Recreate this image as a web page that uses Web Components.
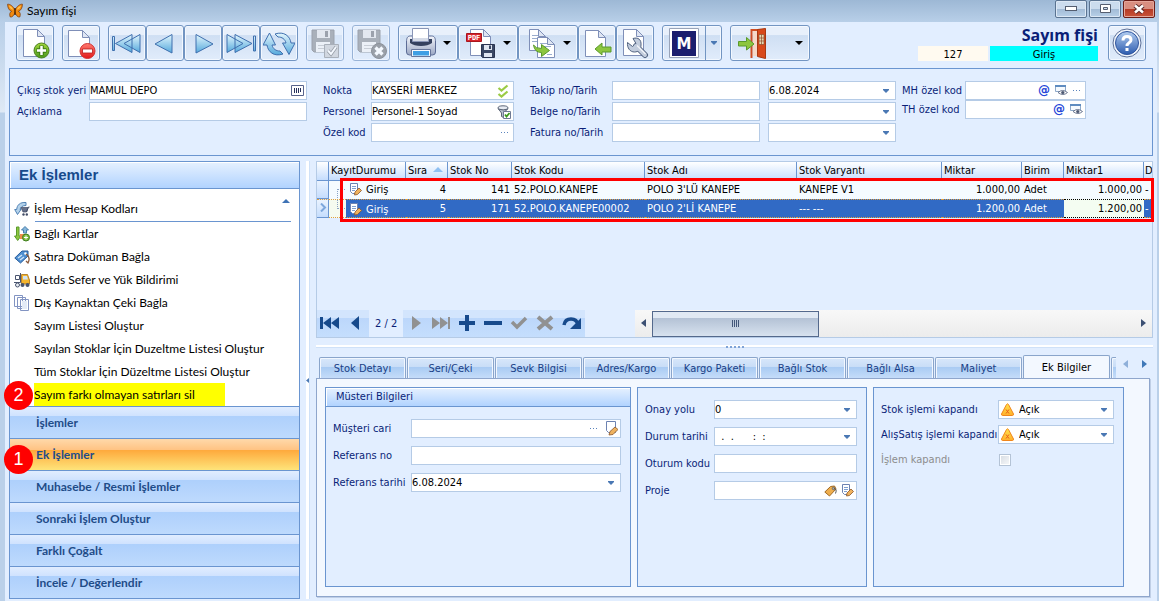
<!DOCTYPE html>
<html lang="tr">
<head>
<meta charset="UTF-8">
<title>Sayım fişi</title>
<style>
    html, body {
        height: 100%;
        margin: 0;
    }

    body {
        --ui: "DejaVu Sans Condensed", "DejaVu Sans", sans-serif;
        --menu: Lato, "Open Sans", sans-serif;
        --line: #6a95d0;
        --soft: #b5cbe6;
        --navy: #0a1f78;
        --page: #e2eeff;
        font-family: var(--ui);
        font-size: 11px;
        line-height: 14px;
        color: #000;
        overflow: hidden;
    }
</style>
</head>
<body>
<app-window caption="Sayım fişi">
    <tool-bar slot="toolbar"></tool-bar>
    <filter-panel slot="filters"></filter-panel>
    <side-menu slot="side"></side-menu>
    <stock-grid slot="grid"></stock-grid>
    <detail-tabs slot="details"></detail-tabs>
</app-window>

<script>
const page = 'fill="#fff" stroke="#7f8fb8"';
const sheet = (x, y, w, h) => `<path ${page} d="M${x} ${y}h${w - 7}l7 7v${h - 7}h-${w}z"/><path fill="#dfe6f3" stroke="#7f8fb8" d="M${x + w - 7} ${y}v7h7z"/>`;
const disk = '<path fill="#8b8f96" stroke="#777b82" d="M3 3h22v22H5l-2-2z"/><path fill="#e4e6e9" d="M8 3h13v8H8z"/><path fill="#777b82" d="M16 4h3v6h-3z"/><path fill="#f1f2f4" d="M7 15h14v10H7z"/><path stroke="#b9bcc1" d="M9 18.5h10M9 21.5h10"/>';
const grad = (id, a, b) => `<defs><linearGradient id="${id}" x1="0" y1="0" x2="0" y2="1"><stop offset="0" stop-color="${a}"/><stop offset="1" stop-color="${b}"/></linearGradient></defs>`;
const blue = grad('b', '#e3f6fd', '#55a9dc');
const paint = 'fill="url(#b)" stroke="#3f6fae" stroke-linejoin="round"';
const greenArrow = 'fill="#8dc63f" stroke="#5a9a2c" stroke-linejoin="round"';

// every drawing is [width, height, markup]
const icons = {
    butterfly: [16, 16, '<path fill="#f08a12" stroke="#7a3605" stroke-width=".7" d="M8 7C6 3 3 1 .6 1.200c0 3 1 6 4 7.200-2 .8-2.300 3-1.400 5.600C5.500 14.500 7 12 8 9.500c1 2.500 2.500 5 4.800 4.500.9-2.600.6-4.800-1.400-5.600 3-1.200 4-4.200 4-7.200C13 1 10 3 8 7z"/><path fill="#ffc14a" d="M2 2.500c2 .6 3.500 2.200 4.300 4.300C4 6.500 2.500 5 2 2.500zM14 2.500c-2 .6-3.500 2.200-4.300 4.300C12 6.500 13.500 5 14 2.500z"/><path stroke="#3a1c05" stroke-width="1.300" d="M8 5v7"/>'],
    add: [32, 32, sheet(4.5, 2.5, 21, 27) + grad('g', '#a5d83d', '#4b9a1c') + '<circle cx="22.500" cy="23.500" r="7.500" fill="url(#g)" stroke="#4c7f22"/><path stroke="#3c7a16" stroke-width="4.500" d="M17.500 23.500h10M22.500 18.500v10"/><path stroke="#fff" stroke-width="2.500" d="M18 23.500h9M22.500 19v9"/>'],
    remove: [32, 32, sheet(3.5, 3.5, 21, 26) + grad('r', '#ff7a70', '#e11919') + '<circle cx="22.500" cy="24" r="7.500" fill="url(#r)" stroke="#d13434"/><path fill="#fff" stroke="#b91a1a" stroke-width=".8" d="M17.500 22h10v4h-10z"/>'],
    first: [32, 32, blue + `<path ${paint} d="M1.500 9.500h2v14h-2zM4.500 16.500L21 7.500v18zM13 16.500l16-9v18z"/>`],
    prev: [32, 32, blue + `<path ${paint} d="M6 17L23 7.500v18.500z"/>`],
    next: [32, 32, blue + `<path ${paint} d="M26 17L9 7.500v18.500z"/>`],
    last: [32, 32, blue + `<path ${paint} d="M28.500 9h2v15h-2zM27 16.500L10 7.500v18zM18 16.500L2 7.500v18z"/>`],
    refresh: [32, 32, blue + `<path ${paint} d="M0 18L6.500 6l6 12H9c1 4 4 6 8 6l3 3c-9 3-15-2-16-9zM32 16l-6 11.500L19.500 16H23c-1-4-4-6-8-6l-3-3c9-3 15 2 16 9z"/>`],
    saveok: [32, 32, disk + '<path fill="#c9ccd0" stroke="#8c9096" d="M15.500 17.500h14v13h-14z"/><path fill="none" stroke="#6e7278" stroke-width="3.500" d="M19 23.500l3 3.500 5-7"/><path fill="none" stroke="#fff" stroke-width="2" d="M19 23.500l3 3.500 5-7"/>'],
    savecancel: [32, 32, disk + '<circle cx="24" cy="24" r="7.500" fill="#74777c" stroke="#5e6165"/><path stroke="#fff" stroke-width="3.200" d="M20.500 20.500l7 7M27.500 20.500l-7 7"/>'],
    print: [32, 32, grad('p', '#f4f6fb', '#9aa7c4') + '<path fill="url(#p)" stroke="#5c6c96" d="M1.500 15c0-4 1-6 4-6h21c3 0 4 2 4 6v10q0 3-3 3h-23q-3 0-3-3z"/><path fill="#34415f" d="M5 12h22v4q-4 3-11 3T5 16z"/><path fill="#fff" stroke="#8995b6" d="M7.500 1.500h16v13h-16z"/><path fill="#d4dae6" d="M8 11h15v3H8z"/><path fill="#f7fafe" stroke="#66759b" d="M6.500 22.500h19v7h-19z"/><path fill="#3f9fe4" d="M8 24h16v4.500H8z"/>'],
    pdf: [32, 32, sheet(5.5, 2.5, 20, 26) + '<path fill="#d8242c" stroke="#a9161d" d="M1.500 6.500h15v8h-15z"/><text x="9" y="13" font-family="DejaVu Sans Mono" font-size="7" font-weight="700" fill="#fff" text-anchor="middle">PDF</text><path fill="#3a4764" stroke="#2a3450" d="M16.500 17.500h13v13h-12l-1-1z"/><path fill="#dfe5f0" d="M19 18h8v5h-8zM19 26h8v4h-8z"/><path fill="#3a4764" d="M24 18.500h2v3.500h-2z"/>'],
    copy: [32, 32, sheet(4.5, 2.5, 16, 21) + '<path stroke="#9badce" d="M7 8.500h6M7 11.500h6M7 14.500h6"/>' + sheet(12.5, 10.5, 17, 20) + '<path stroke="#9badce" d="M15 16.500h7M18 19.500h8M22 27.500h5"/>' + `<path ${greenArrow} d="M8.500 18q2 3.500 8 3.500v-4l8 6-8 6v-4q-7 0-8-7.500z"/>`],
    back: [32, 32, sheet(4.5, 3.5, 20, 26) + `<path ${greenArrow} d="M14 22l7-6v4h9v5h-9v3z"/>`],
    wrench: [32, 32, sheet(4.5, 2.5, 20, 26) + '<path fill="none" stroke="#50617f" stroke-width="6" stroke-linecap="round" d="M17 19l9 9"/><path fill="#c3cddd" stroke="#50617f" stroke-linejoin="round" d="M8.500 15.500l5 4 3.500-3-3-5c5-1.500 8.500 1 8 6.500 0 4-2.500 7-6.500 7-4.500 0-7.500-4-7-9.500z"/><path fill="none" stroke="#c3cddd" stroke-width="4" stroke-linecap="round" d="M17 19l9 9"/><path stroke="#f2f5fa" stroke-width="1.200" d="M18 18.500l8.500 8.500"/>'],
    logo: [32, 32, '<path fill="#fff" stroke="#98a3b8" d="M1.500 1.500h29v29h-29z"/><path fill="#1b1e6e" d="M4 4h24v25H4z"/><text x="16" y="22" font-family="DejaVu Sans" font-size="15" font-weight="700" fill="#fff" text-anchor="middle">M</text>'],
    exit: [32, 32, '<path fill="none" stroke="#cf4d22" stroke-width="2" d="M14.500 31V3H25"/><path fill="#f5d9c9" d="M16 4h6v25h-6z"/><path fill="#d8491b" stroke="#a83812" d="M20.500 2.500l8-1v30l-8-2z"/><path fill="#e6d9b4" stroke="#8f4b28" stroke-width=".7" d="M22 7.500h5v10h-5zM24.500 7.500v10M22 11h5M22 14h5"/><path fill="#8dc63f" stroke="#5a9a2c" d="M1.500 14.500h8v-4l7.500 6.500-7.500 6v-4h-8z"/>'],
    help: [32, 32, grad('h', '#b2cdf0', '#2d5caf') + '<circle cx="16" cy="16" r="14" fill="#f2f6fc" stroke="#5e7199"/><circle cx="16" cy="16" r="11.500" fill="url(#h)" stroke="#2f559e"/><path fill="none" stroke="#fff" stroke-width="3" d="M12 13.500q0-4 4-4t4 3.500c0 3-4 2.500-4 6"/><path fill="#fff" d="M14.500 21h3v3h-3z"/>'],
    barcode: [13, 11, '<path fill="#fff" stroke="#59648c" d="M.5.500h12v10H.5z"/><path stroke="#26305a" stroke-width="1" d="M3.500 3v5M5.500 3v5M7.500 3v5M9.500 3v4"/>'],
    checks: [14, 14, '<path fill="none" stroke="#9bcb45" stroke-width="2.200" d="M1.500 4l3 2.500 6-5M1.500 10l3 2.500 6-5"/>'],
    filter: [14, 14, '<ellipse cx="6" cy="3" rx="5" ry="2.200" fill="#e7ebf2" stroke="#5b6577"/><path fill="#b9c2d1" stroke="#5b6577" d="M1.500 4l3 4v3.500l2 1V8l4-4q-4 2-9 0z"/><path fill="#fff" stroke="#6f7a95" d="M6.500 6.500h7v7h-7z"/><path fill="none" stroke="#3d9a1f" stroke-width="1.800" d="M8 9.500l1.500 2L12.500 8"/>'],
    dots: [10, 3, '<path fill="#5b84bd" d="M0 1h1v1H0zM3 1h1v1H3zM6 1h1v1H6z"/>'],
    at: [12, 13, '<text x="6" y="10" font-family="DejaVu Sans" font-size="12" font-weight="700" fill="#2446d8" text-anchor="middle">@</text>'],
    eye: [13, 11, '<path fill="#f6fafe" stroke="#8fa9c9" d="M.5.500h10v6H.5z"/><path fill="#5f8cc0" d="M0 0h11v2H0z"/><path fill="#fff" stroke="#6b7690" d="M3 7.500q4.500-4 9.500 0-4.500 4-9.500 0z"/><circle cx="7.800" cy="7.500" r="1.600" fill="#4c5872"/>'],
    arrow: [6, 4, '<path fill="#4a78b4" d="M0 0h6v1L3 4 0 1z"/>'],
    edit: [13, 15, '<path fill="#fff" stroke="#6d83b2" d="M1.500.500h9v11h-7l-2-2z"/><path fill="#efb25e" stroke="#8a552a" stroke-width=".8" d="M4 14l1-3.500 5-4.500 3 2.500-5 5z"/>'],
    note: [12, 13, '<path fill="#fff" stroke="#6d83b2" d="M.5.500h7v10h-5l-2-2z"/><path stroke="#7f9fd0" d="M2 3.500h4M2 5.500h4M2 7.500h3"/><path fill="#efb25e" stroke="#8a552a" stroke-width=".8" d="M4.500 12l.5-3 4-4 2.500 2.500-4 4z"/>'],
    tag: [13, 12, '<path fill="#efae4d" stroke="#a06a25" d="M.8 7L6.500 1.500l4-.5 1.500 3L5.500 11z"/><circle cx="9.500" cy="3.500" r="1.200" fill="#fff" stroke="#555"/><path fill="none" stroke="#555" d="M9.500 3.500q4 0 2 5"/>'],
    warn: [13, 13, grad('w', '#ffe14a', '#ffb02c') + '<path fill="url(#w)" stroke="#f0861c" stroke-linejoin="round" d="M5.500 1.500q1-1.500 2 0l5 9.500q0 1.500-1 1.500h-10q-1 0-1-1.500z"/><path stroke="#e8601a" d="M5 6.500l3 4M8 6.500l-3 4"/>'],
    cart: [16, 16, '<path fill="#b4d2ea" stroke="#4f81b5" d="M3.500 13.500L.7 8.500h2C3 4 6 1 12 1.500v3C8.500 4.500 6.500 6 6 8.500h1z"/><path fill="#66708a" stroke="#424c66" stroke-width=".7" d="M7 6.500h7l-1.500 4.500H9z"/><path fill="none" stroke="#424c66" d="M12.500 11l2-5h1"/><circle cx="9.500" cy="13.500" r="1.200" fill="#424c66"/><circle cx="12.800" cy="13.500" r="1.200" fill="#424c66"/>'],
    cards: [16, 16, `<path ${greenArrow} d="M2.500 1h2.500v9h2L3.700 14.500.500 10h2z"/><path fill="#86b6da" stroke="#477fac" d="M9.500 7V4h-2l3.500-3.500L14.500 4h-2v3z"/><path fill="#ec8b4d" d="M6 8h6v5H6z"/><circle cx="12" cy="11.500" r="3.500" fill="#7dbb3a" stroke="#3f7d1f"/><path stroke="#fff" d="M10 11.500h4M12 9.500v4"/>`],
    label: [16, 16, '<path fill="#4f8fd0" stroke="#285c9c" d="M.8 9L8 2h6v5l-7.500 7z"/><path stroke="#cfe3f7" stroke-width="1.500" d="M4 9l4-3M6 11l4-3"/><circle cx="11.500" cy="4.500" r="1.300" fill="#fff"/><path fill="none" stroke="#8a5b3d" stroke-width="1.300" d="M12 5q5 3 2 9l-2-2"/>'],
    truck: [16, 16, '<path fill="#f4b52e" stroke="#a97013" stroke-width=".8" d="M7.500 8V2.500h6L15.500 8v4h-8z"/><path fill="#cfe3f4" d="M9 4h4l1 3.500H9z"/><path fill="#fff" stroke="#49546e" d="M1.500 3.500h4v4h-4zM0 10.500h6.500V1"/><circle cx="3.500" cy="13" r="2" fill="#e8ecf2" stroke="#49546e"/><circle cx="8.500" cy="13" r="2" fill="#49546e"/><circle cx="13.500" cy="13" r="2" fill="#49546e"/>'],
    sheets: [16, 16, '<path fill="#fff" stroke="#8294c2" d="M.5.500h8v11h-8zM3.500 2.500h8v11h-8zM6.500 4.500h8v11h-8z"/><path fill="#e3eaf6" d="M8 6h5v8H8z"/>'],
    up: [8, 4, '<path fill="#3f73b5" d="M0 4l4-4 4 4z"/>'],
    sort: [10, 5, '<path fill="#8fc0f2" d="M0 5l5-5 5 5z"/>'],
    tri: [5, 8, '<path fill="currentColor" d="M5 0v8L0 4z"/>'],
    rtri: [5, 8, '<path fill="currentColor" d="M0 0v8l5-4z"/>'],
    grip: [5, 5, '<path fill="currentColor" d="M3 0v5L0 2.500z"/>'],
    marker: [7, 9, '<path fill="none" stroke="#7da7dc" stroke-width="2" d="M1 .500l4 4-4 4"/>'],
    navfirst: [20, 16, '<path fill="#174a8c" d="M0 2h3v12H0zM3 8l8-6v12zM11 8l8-6v12z"/>'],
    navprev: [20, 16, '<path fill="#174a8c" d="M5 8l8-7v14z"/>'],
    navnext: [20, 16, '<path fill="#919191" d="M6 1l9 7-9 7z"/>'],
    navlast: [20, 16, '<path fill="#919191" d="M0 2l8 6-8 6zM8 2l8 6-8 6zM16 2h2v12h-2z"/>'],
    navadd: [20, 16, '<path fill="#174a8c" d="M7 0h4v6h6v4h-6v6H7v-6H1V6h6z"/>'],
    navdel: [20, 16, '<path fill="#174a8c" d="M0 6h18v4H0z"/>'],
    navok: [20, 16, '<path fill="none" stroke="#919191" stroke-width="3.500" d="M2 7l5 5 9-9"/>'],
    navno: [20, 16, '<path stroke="#919191" stroke-width="4" d="M2 2l14 12M16 2L2 14"/>'],
    navredo: [20, 16, '<path fill="none" stroke="#174a8c" stroke-width="3.500" d="M2 10q1-6 7-6t7 6"/><path fill="#174a8c" d="M19 3v11H8z"/>'],
};

class UiIcon extends HTMLElement {
    constructor() {
        super();
        this.attachShadow({ mode: 'open' });
    }

    connectedCallback() {
        const [w, h, art] = icons[this.getAttribute('name')];
        this.shadowRoot.innerHTML = `
        <style>
        :host {
            display: inline-flex;
            flex: none;
        }
        svg {
            display: block;
        }
        </style>
        <svg width="${w}" height="${h}" viewBox="0 0 ${w} ${h}" fill="none" aria-hidden="true">${art}</svg>
        `;
    }
}
customElements.define('ui-icon', UiIcon);


class AppWindow extends HTMLElement {
    constructor() {
        super();
        this.attachShadow({ mode: 'open' });
    }

    connectedCallback() {
        this.shadowRoot.innerHTML = `
        <style>
        :host {
            display: flex;
            flex-direction: column;
            height: 100vh;
            background: linear-gradient(#b8cfe8 22px, #dfe9f5 112px, #bad0e9 113px);
        }
        .title {
            display: flex;
            align-items: center;
            gap: 2px;
            height: 22px;
            padding: 0 4px 0 7px;
            background: linear-gradient(#9db8d5, #b8cfe8);
            font: 12px/18px var(--menu);
            box-sizing: border-box;
            flex: none;
        }
        .title span {
            flex: 1;
            padding-left: 2px;
        }
        .title button {
            display: flex;
            align-items: center;
            justify-content: center;
            align-self: start;
            width: 32px;
            height: 18px;
            padding: 0;
            border: 1px solid #5a7391;
            border-radius: 2px;
            background: linear-gradient(#cbdcee 50%, #a2bbd6 50%, #b8d0e8);
            box-shadow: inset 0 0 0 1px #dce8f5;
        }
        .title .close {
            border-color: #6b1d18;
            background: linear-gradient(#d98e80 50%, #b53a26 50%, #c9543a);
            box-shadow: inset 0 0 0 1px #e5a69a;
        }
        .client {
            flex: 1;
            display: flex;
            flex-direction: column;
            min-height: 0;
            margin: 0 2px 0 5px;
            padding: 3px 4px 2px;
            background: var(--page);
        }
        .work {
            flex: 1;
            display: grid;
            grid-template-columns: 291px 16px 1fr;
            margin-top: 5px;
            min-height: 0;
        }
        .split {
            display: flex;
            align-items: center;
            padding-left: 6px;
            color: #4a78b4;
            background: linear-gradient(90deg, transparent 6px, #fff 6px 9px, #cfe1f8 9px 10px, transparent 10px);
        }
        .right {
            display: grid;
            grid-template-rows: 177px 17px 1fr;
            min-width: 0;
        }
        .bar {
            display: flex;
            align-items: center;
            justify-content: center;
            gap: 2px;
            background: linear-gradient(transparent 7px, #fff 7px 9px, #cfe1f8 9px 10px, transparent 10px);
        }
        .bar i {
            width: 2px;
            height: 2px;
            background: #7fa3d6;
        }
        </style>
        <div class="title">
            <ui-icon name="butterfly"></ui-icon>
            <span></span>
            <button aria-label="Küçült"><svg width="12" height="6"><rect x=".5" y=".5" width="11" height="4" fill="#fff" stroke="#555e70"/></svg></button>
            <button aria-label="Büyüt"><svg width="11" height="10"><path fill="#fff" fill-rule="evenodd" stroke="#555e70" d="M.5.500h10v8H.5zM3.500 3.500h4v2h-4z"/></svg></button>
            <button class="close" aria-label="Kapat"><svg width="12" height="10"><path stroke="#5b2a2a" stroke-width="4.500" d="M2 1.500l8 7M10 1.500l-8 7"/><path stroke="#fff" stroke-width="2.500" d="M2 1.500l8 7M10 1.500l-8 7"/></svg></button>
        </div>
        <div class="client">
            <slot name="toolbar"></slot>
            <slot name="filters"></slot>
            <div class="work">
                <slot name="side"></slot>
                <div class="split"><ui-icon name="grip"></ui-icon></div>
                <div class="right">
                    <slot name="grid"></slot>
                    <div class="bar"><i></i><i></i><i></i><i></i><i></i></div>
                    <slot name="details"></slot>
                </div>
            </div>
        </div>
        `;
        this.shadowRoot.querySelector('span').textContent = this.getAttribute('caption');
    }
}
customElements.define('app-window', AppWindow);


class ToolButton extends HTMLElement {
    constructor() {
        super();
        this.attachShadow({ mode: 'open' });
    }

    connectedCallback() {
        const menu = this.getAttribute('menu');
        this.shadowRoot.innerHTML = `
        <style>
        :host {
            display: block;
            width: 38px;
            height: 36px;
            flex: none;
        }
        :host([menu]) {
            width: 60px;
        }
        :host([wide]) {
            width: 80px;
        }
        :host([off]) {
            opacity: 0.65;
        }
        button {
            display: flex;
            align-items: center;
            justify-content: space-between;
            width: 100%;
            height: 100%;
            padding: 0 6px;
            border: 1px solid #7295c2;
            border-radius: 3px;
            background: linear-gradient(#e8f0fb 27%, #cfdff3 28%, #e1ecfb);
            box-shadow: inset 0 0 0 1px #f3f8ff;
            overflow: hidden;
        }
        :host(:not([menu])) button {
            padding: 0 2px;
            justify-content: center;
        }
        .caret {
            border: 4px solid transparent;
            border-top-color: #000;
            border-bottom: 0;
        }
        .thin {
            align-self: stretch;
            display: flex;
            align-items: center;
            padding-left: 5px;
            border-left: 1px solid #7295c2;
        }
        :host([menu="thin"]) button {
            padding: 0 4px 0 5px;
        }
        </style>
        <button><ui-icon name="${this.getAttribute('icon')}"></ui-icon>${menu === 'thin' ? '<span class="thin"><ui-icon name="arrow"></ui-icon></span>' : menu !== null ? '<span class="caret"></span>' : ''}</button>
        `;
        this.shadowRoot.querySelector('button').setAttribute('aria-label', this.getAttribute('hint'));
    }
}
customElements.define('tool-button', ToolButton);


class ToolBar extends HTMLElement {
    constructor() {
        super();
        this.attachShadow({ mode: 'open' });
        this.shadowRoot.innerHTML = `
        <style>
        :host {
            display: flex;
            gap: 8px;
            height: 36px;
            padding: 0 7px;
            flex: none;
        }
        .group {
            display: flex;
        }
        .doc {
            margin-left: auto;
            display: grid;
            grid-template-columns: 70px 108px;
            grid-template-rows: 21px 15px;
            column-gap: 2px;
            text-align: center;
            padding-right: 2px;
        }
        h1 {
            grid-column: 1 / 3;
            margin: 0;
            text-align: right;
            font: bold 16px/21px "Open Sans", sans-serif;
            color: #0a1f78;
        }
        .no, .kind {
            background: #fffaf0;
            line-height: 17px;
        }
        .kind {
            background: #00ffff;
        }
        </style>
        <tool-button icon="add" hint="Yeni"></tool-button>
        <tool-button icon="remove" hint="Sil"></tool-button>
        <div class="group">
            <tool-button icon="first" hint="İlk"></tool-button>
            <tool-button icon="prev" hint="Önceki"></tool-button>
            <tool-button icon="next" hint="Sonraki"></tool-button>
            <tool-button icon="last" hint="Son"></tool-button>
            <tool-button icon="refresh" hint="Yenile"></tool-button>
        </div>
        <tool-button icon="saveok" hint="Kaydet" off></tool-button>
        <tool-button icon="savecancel" hint="Vazgeç" off></tool-button>
        <div class="group">
            <tool-button icon="print" hint="Yazdır" menu></tool-button>
            <tool-button icon="pdf" hint="PDF" menu></tool-button>
            <tool-button icon="copy" hint="Kopyala" menu></tool-button>
            <tool-button icon="back" hint="Aktar"></tool-button>
            <tool-button icon="wrench" hint="Ayarlar"></tool-button>
        </div>
        <tool-button icon="logo" hint="M" menu="thin"></tool-button>
        <tool-button icon="exit" hint="Çıkış" menu wide></tool-button>
        <div class="doc">
            <h1>Sayım fişi</h1>
            <span class="no">127</span>
            <span class="kind">Giriş</span>
        </div>
        <tool-button icon="help" hint="Yardım"></tool-button>
        `;
    }
}
customElements.define('tool-bar', ToolBar);


/* label + input; kind="select" gives a drop-down, kind="check" a tick box.
   Icons passed in the slot stand at the right end of the box */
class FormField extends HTMLElement {
    constructor() {
        super();
        this.attachShadow({ mode: 'open' });
    }

    connectedCallback() {
        const kind = this.getAttribute('kind');
        const label = this.getAttribute('label');
        const value = this.getAttribute('value') || '';
        const lead = this.getAttribute('lead');
        let control = `<input id="c" type="text" value="${value}">`;
        if (kind === 'select') control = `<select id="c"><option>${value}</option></select>`;
        if (kind === 'check') control = '<input id="c" type="checkbox" disabled>';
        this.shadowRoot.innerHTML = `
        <style>
        :host {
            display: flex;
            align-items: center;
            height: 19px;
            color: var(--navy);
            white-space: nowrap;
        }
        label {
            width: var(--label, 72px);
            flex: none;
        }
        .box {
            display: flex;
            align-items: center;
            gap: 5px;
            flex: 1;
            min-width: 0;
            height: 19px;
            padding-right: 2px;
            border: 1px solid var(--soft);
            background: #fff;
            box-sizing: border-box;
        }
        input, select {
            flex: 1;
            min-width: 0;
            width: 0;
            height: 17px;
            margin: 0;
            padding: 0;
            border: 0;
            outline: 0;
            background: none;
            appearance: none;
            font: inherit;
            color: #000;
            white-space: pre;
        }
        .lead {
            margin-left: 2px;
        }
        .plain {
            flex: 1;
        }
        input[type=checkbox] {
            flex: none;
            width: 12px;
            height: 12px;
            margin-left: 1px;
            border: 1px solid #b4c3d6;
            background: linear-gradient(135deg, #d6dbe2, #f8f9fb);
            box-shadow: inset 0 0 0 1px #fff;
            vertical-align: middle;
        }
        :host([kind=check]) {
            color: #8d8d8d;
        }
        .caret {
            display: flex;
            padding: 0 4px;
            border: 0;
            background: none;
            pointer-events: none;
        }
        </style>
        ${label ? `<label for="c">${label}</label>` : ''}
        <div class="${kind === 'check' ? 'plain' : 'box'}">
            ${lead ? `<ui-icon class="lead" name="${lead}"></ui-icon>` : ''}
            ${control}
            <slot></slot>
            ${kind === 'select' || kind === 'date' ? '<button class="caret" tabindex="-1" aria-label="Aç"><ui-icon name="arrow"></ui-icon></button>' : ''}
        </div>
        `;
        if (!label) this.shadowRoot.querySelector('#c').setAttribute('aria-label', this.getAttribute('hint'));
    }
}
customElements.define('form-field', FormField);


class FilterPanel extends HTMLElement {
    constructor() {
        super();
        this.attachShadow({ mode: 'open' });
        this.shadowRoot.innerHTML = `
        <style>
        :host {
            display: grid;
            grid-template-columns: 306fr 207fr 238fr 134fr 184fr;
            align-items: start;
            height: 88px;
            margin-top: 7px;
            padding: 12px 66px 0 7px;
            border: 1px solid var(--line);
            box-sizing: border-box;
            flex: none;
        }
        .col {
            display: grid;
            gap: 2px;
        }
        .a {
            margin-right: 16px;
        }
        .b {
            --label: 48px;
            margin-right: 16px;
        }
        .c {
            --label: 82px;
            margin-right: 8px;
        }
        .dates {
            margin-right: 6px;
        }
        .d {
            --label: 63px;
            gap: 0;
        }
        </style>
        <div class="col a">
            <form-field label="Çıkış stok yeri" value="MAMUL DEPO"><ui-icon name="barcode"></ui-icon></form-field>
            <form-field label="Açıklama"></form-field>
        </div>
        <div class="col b">
            <form-field label="Nokta" value="KAYSERİ MERKEZ"><ui-icon name="checks"></ui-icon></form-field>
            <form-field label="Personel" value="Personel-1 Soyad"><ui-icon name="filter"></ui-icon></form-field>
            <form-field label="Özel kod"><ui-icon name="dots"></ui-icon></form-field>
        </div>
        <div class="col c">
            <form-field label="Takip no/Tarih"></form-field>
            <form-field label="Belge no/Tarih"></form-field>
            <form-field label="Fatura no/Tarih"></form-field>
        </div>
        <div class="col dates">
            <form-field hint="Takip tarihi" kind="date" value="6.08.2024"></form-field>
            <form-field hint="Belge tarihi" kind="date"></form-field>
            <form-field hint="Fatura tarihi" kind="date"></form-field>
        </div>
        <div class="col d">
            <form-field label="MH özel kod"><ui-icon name="at"></ui-icon><ui-icon name="eye"></ui-icon><ui-icon name="dots"></ui-icon></form-field>
            <form-field label="TH özel kod"><ui-icon name="at"></ui-icon><ui-icon name="eye"></ui-icon></form-field>
        </div>
        `;
    }
}
customElements.define('filter-panel', FilterPanel);


class StepBadge extends HTMLElement {
    constructor() {
        super();
        this.attachShadow({ mode: 'open' });
        this.shadowRoot.innerHTML = `
        <style>
        :host {
            position: absolute;
            left: -6px;
            top: 50%;
            width: 29px;
            height: 29px;
            margin-top: -14px;
            border-radius: 50%;
            background: #f00;
            color: #fff;
            font: 18px/29px "Liberation Sans", sans-serif;
            text-align: center;
            z-index: 1;
        }
        </style>
        <slot></slot>
        `;
    }
}
customElements.define('step-badge', StepBadge);


class SideMenu extends HTMLElement {
    constructor() {
        super();
        this.attachShadow({ mode: 'open' });
        this.shadowRoot.innerHTML = `
        <style>
        :host {
            display: flex;
            flex-direction: column;
            border: 1px solid var(--line);
            font: 12px/16px var(--menu);
            box-sizing: border-box;
        }
        h2 {
            margin: 0;
            padding-left: 9px;
            border-bottom: 1px solid var(--line);
            background: linear-gradient(#e6f1ff, #b1d3ff);
            box-shadow: inset 1px 1px #fff;
            font: bold 15px/26px "Liberation Sans", sans-serif;
            color: #174a8c;
        }
        .list {
            flex: 1;
            background: #fff;
        }
        ul {
            list-style: none;
            margin: 0;
            padding: 0;
        }
        .head {
            display: flex;
            justify-content: space-between;
            height: 32px;
            margin: 0 8px 0 25px;
            padding-right: 1px;
            border-bottom: 1px solid var(--line);
        }
        .head a {
            align-items: end;
            padding-bottom: 4px;
            margin-left: -21px;
        }
        .head > ui-icon {
            margin-top: 10px;
        }
        li {
            position: relative;
            display: flex;
            height: 23px;
            padding-left: 4px;
        }
        a {
            display: flex;
            align-items: center;
            gap: 4px;
            color: #000;
            text-decoration: none;
            white-space: nowrap;
        }
        .bare {
            padding-left: 24px;
        }
        .mark a {
            width: 191px;
            background: #ff0;
        }
        nav {
            display: grid;
        }
        nav button {
            position: relative;
            height: 32px;
            padding: 0 0 0 26px;
            border: 0;
            border-top: 1px solid var(--line);
            background: linear-gradient(#e1edff, #cfe2fe 29%, #aed0fc 30%, #bedafd);
            font: bold 12px/16px var(--menu);
            color: #1f4c88;
            text-align: left;
        }
        nav .on {
            background: linear-gradient(#ffd9aa, #ffc383 35%, #fea93c 36%, #fee47a);
        }
        nav step-badge {
            margin-top: -10px;
        }
        </style>
        <h2>Ek İşlemler</h2>
        <div class="list">
            <div class="head">
                <a href="#"><ui-icon name="cart"></ui-icon>İşlem Hesap Kodları</a>
                <ui-icon name="up"></ui-icon>
            </div>
            <ul>
                <li><a href="#"><ui-icon name="cards"></ui-icon>Bağlı Kartlar</a></li>
                <li><a href="#"><ui-icon name="label"></ui-icon>Satıra Doküman Bağla</a></li>
                <li><a href="#"><ui-icon name="truck"></ui-icon>Uetds Sefer ve Yük Bildirimi</a></li>
                <li><a href="#"><ui-icon name="sheets"></ui-icon>Dış Kaynaktan Çeki Bağla</a></li>
                <li class="bare"><a href="#">Sayım Listesi Oluştur</a></li>
                <li class="bare"><a href="#">Sayılan Stoklar İçin Duzeltme Listesi Oluştur</a></li>
                <li class="bare"><a href="#">Tüm Stoklar İçin Düzeltme Listesi Oluştur</a></li>
                <li class="bare mark"><a href="#">Sayım farkı olmayan satırları sil</a><step-badge>2</step-badge></li>
            </ul>
        </div>
        <nav>
            <button>İşlemler</button>
            <button class="on">Ek İşlemler<step-badge>1</step-badge></button>
            <button>Muhasebe / Resmi İşlemler</button>
            <button>Sonraki İşlem Oluştur</button>
            <button>Farklı Çoğalt</button>
            <button>İncele / Değerlendir</button>
        </nav>
        `;
    }
}
customElements.define('side-menu', SideMenu);


class StockGrid extends HTMLElement {
    constructor() {
        super();
        this.attachShadow({ mode: 'open' });
        this.shadowRoot.innerHTML = `
        <style>
        :host {
            position: relative;
            display: flex;
            flex-direction: column;
            border: 1px solid var(--soft);
            box-sizing: border-box;
            min-width: 0;
        }
        table {
            width: 100%;
            table-layout: fixed;
            border-collapse: separate;
            border-spacing: 0;
        }
        th, td {
            padding: 0 2px;
            height: 17px;
            white-space: nowrap;
            overflow: hidden;
            text-align: left;
            font-weight: normal;
            line-height: 16px;
        }
        th {
            height: 18px;
            border-right: 1px solid var(--line);
            border-bottom: 1px solid var(--line);
            background: linear-gradient(#fff, #c5ddfd);
        }
        th:last-child, td:last-child {
            padding: 0 0 0 1px;
            border-right: 0;
        }
        th ui-icon {
            margin-left: 6px;
            vertical-align: 2px;
        }
        .n {
            text-align: right;
        }
        tbody td {
            background: #f5fbff;
        }
        tbody td.ind {
            padding: 0 0 0 3px;
            border-right: 1px solid var(--line);
            border-bottom: 1px solid var(--line);
            background: linear-gradient(#eaf3ff, #c5ddfd);
        }
        td.tree {
            padding-left: 8px;
        }
        /* dotted branch joining the two rows */
        .tree::before {
            content: "";
            display: inline-block;
            width: 7px;
            height: 8px;
            margin-right: 5px;
            border: 1px dotted #8aa3c4;
            border-width: 1px 0 0 1px;
            vertical-align: -5px;
        }
        .sel .tree::before {
            border-width: 0 0 1px 1px;
            vertical-align: 4px;
        }
        .tree ui-icon {
            vertical-align: -3px;
            margin-right: 4px;
        }
        .sel td {
            background: #316ac5;
            color: #fff;
            height: 15px;
            line-height: 15px;
            border-top: 1px dotted #e0a040;
            border-bottom: 1px dotted #e0a040;
        }
        .sel td.tree {
            background: linear-gradient(90deg, #f5fbf0 17px, #316ac5 17px);
        }
        .sel td.focus {
            background: #f4fdf2;
            color: #000;
            border-color: #000;
        }
        .foot {
            display: flex;
            align-items: stretch;
            height: 27px;
            margin-top: auto;
            color: var(--navy);
        }
        .foot > div {
            display: flex;
            align-items: center;
        }
        .nav {
            background: linear-gradient(#d3e5fd 30%, #bcd7fb 31%, #c5defd);
        }
        .nav button, .scroll button {
            display: flex;
            justify-content: center;
            padding: 0 0 2px;
            border: 0;
            background: none;
            width: 26px;
            color: inherit;
        }
        .pos {
            padding: 0 6px;
            width: 22px;
            white-space: nowrap;
        }
        .scroll {
            flex: 1;
            margin-left: 50px;
            background: linear-gradient(#f8f8f8, #ececec);
            color: #3c5073;
        }
        .scroll button {
            width: 17px;
        }
        .thumb {
            display: flex;
            align-items: center;
            justify-content: center;
            gap: 1px;
            width: 32%;
            height: 24px;
            border: 1px solid #54698c;
            background: linear-gradient(#e1e9f3 25%, #b4c2d5 26%, #d7e2ef);
        }
        .thumb i {
            width: 1px;
            height: 7px;
            background: #43577a;
        }
        .end {
            margin-left: auto;
        }
        .callout {
            position: absolute;
            left: 23px;
            right: -2px;
            top: 16px;
            height: 38px;
            border: 3px solid #f00;
            pointer-events: none;
        }
        </style>
        <table>
            <colgroup>
                <col style="width:12px"><col style="width:77px"><col style="width:42px"><col style="width:64px"><col><col style="width:152px"><col style="width:145px"><col style="width:80px"><col style="width:42px"><col style="width:80px"><col style="width:8px">
            </colgroup>
            <thead>
                <tr><th></th><th>KayıtDurumu</th><th>Sıra<ui-icon name="sort"></ui-icon></th><th>Stok No</th><th>Stok Kodu</th><th>Stok Adı</th><th>Stok Varyantı</th><th>Miktar</th><th>Birim</th><th>Miktar1</th><th>D</th></tr>
            </thead>
            <tbody>
                <tr><td class="ind"></td><td class="tree"><ui-icon name="note"></ui-icon>Giriş</td><td class="n">4</td><td class="n">141</td><td>52.POLO.KANEPE</td><td>POLO 3'LÜ KANEPE</td><td>KANEPE V1</td><td class="n">1.000,00</td><td>Adet</td><td class="n">1.000,00</td><td>-</td></tr>
                <tr class="sel"><td class="ind"><ui-icon name="marker"></ui-icon></td><td class="tree"><ui-icon name="note"></ui-icon>Giriş</td><td class="n">5</td><td class="n">171</td><td>52.POLO.KANEPE00002</td><td>POLO 2'Lİ KANEPE</td><td>--- ---</td><td class="n">1.200,00</td><td>Adet</td><td class="n focus">1.200,00</td><td>-</td></tr>
            </tbody>
        </table>
        <div class="callout"></div>
        <div class="foot">
            <div class="nav">
                <button aria-label="İlk"><ui-icon name="navfirst"></ui-icon></button>
                <button aria-label="Önceki"><ui-icon name="navprev"></ui-icon></button>
            </div>
            <div class="pos">2 / 2</div>
            <div class="nav">
                <button aria-label="Sonraki"><ui-icon name="navnext"></ui-icon></button>
                <button aria-label="Son"><ui-icon name="navlast"></ui-icon></button>
                <button aria-label="Ekle"><ui-icon name="navadd"></ui-icon></button>
                <button aria-label="Sil"><ui-icon name="navdel"></ui-icon></button>
                <button aria-label="Kaydet"><ui-icon name="navok"></ui-icon></button>
                <button aria-label="Vazgeç"><ui-icon name="navno"></ui-icon></button>
                <button aria-label="Yenile"><ui-icon name="navredo"></ui-icon></button>
            </div>
            <div class="scroll">
                <button aria-label="Sola"><ui-icon name="tri"></ui-icon></button>
                <div class="thumb"><i></i><i></i><i></i><i></i></div>
                <button class="end" aria-label="Sağa"><ui-icon name="rtri"></ui-icon></button>
            </div>
        </div>
        `;
    }
}
customElements.define('stock-grid', StockGrid);


class GroupBox extends HTMLElement {
    constructor() {
        super();
        this.attachShadow({ mode: 'open' });
    }

    connectedCallback() {
        const caption = this.getAttribute('caption');
        this.shadowRoot.innerHTML = `
        <style>
        :host {
            display: block;
            border: 1px solid var(--line);
            background: var(--page);
            color: var(--navy);
            box-sizing: border-box;
            min-width: 0;
        }
        h3 {
            margin: 0;
            padding-left: 10px;
            border-bottom: 1px solid var(--line);
            background: linear-gradient(#e6f1ff, #b1d3ff);
            box-shadow: inset 1px 1px #fff;
            font: 11px/18px var(--ui);
        }
        .body {
            display: grid;
            gap: var(--gap, 8px);
            padding: 12px 9px 0 7px;
        }
        </style>
        ${caption ? `<h3>${caption}</h3>` : ''}
        <div class="body"><slot></slot></div>
        `;
    }
}
customElements.define('group-box', GroupBox);


class DetailTabs extends HTMLElement {
    constructor() {
        super();
        this.attachShadow({ mode: 'open' });
        this.shadowRoot.innerHTML = `
        <style>
        :host {
            display: flex;
            flex-direction: column;
            padding: 0 3px 2px 0;
            min-width: 0;
        }
        .strip {
            display: flex;
            height: 23px;
            padding-left: 3px;
        }
        .tabs {
            flex: 1;
            display: flex;
            align-items: end;
            gap: 1px;
            overflow: hidden;
        }
        .tabs button {
            flex: none;
            width: 87px;
            height: 21px;
            padding: 2px 0 0;
            border: 1px solid #8aa5cb;
            border-bottom: 0;
            border-radius: 2px 2px 0 0;
            background: linear-gradient(#d8e7fa, #c8ddf7 45%, #a9cbf3 46%, #c4dcf9);
            box-shadow: inset 1px 1px #f2f7fe, inset -1px 0 #f2f7fe;
            font: 11px/18px var(--ui);
            color: #1a3f86;
        }
        .tabs .on {
            height: 23px;
            background: #f3f8ff;
            color: #000;
        }
        .arrows {
            display: flex;
            gap: 14px;
            width: 27px;
            padding: 5px 0 0 7px;
            color: #3f78b8;
        }
        .arrows button {
            display: flex;
            height: 8px;
            padding: 0;
            border: 0;
            background: none;
            color: inherit;
        }
        .arrows button:first-child {
            color: #8fb0da;
        }
        .panel {
            flex: 1;
            display: grid;
            grid-template-columns: 306fr 230fr 251fr;
            gap: 6px;
            padding: 8px 25px 9px 8px;
            border: 1px solid #8fa6cc;
            background: #f3f8ff;
            box-shadow: 1px 1px #c0cfe6;
        }
        .one {
            --label: 78px;
        }
        .two {
            --label: 69px;
        }
        .three {
            --label: 117px;
            --gap: 6px;
        }
        </style>
        <div class="strip">
            <div class="tabs" role="tablist">
                <button role="tab">Stok Detayı</button>
                <button role="tab">Seri/Çeki</button>
                <button role="tab">Sevk Bilgisi</button>
                <button role="tab">Adres/Kargo</button>
                <button role="tab">Kargo Paketi</button>
                <button role="tab">Bağlı Stok</button>
                <button role="tab">Bağlı Alsa</button>
                <button role="tab">Maliyet</button>
                <button role="tab" class="on" aria-selected="true">Ek Bilgiler</button>
                <button role="tab" aria-label="Diğer"></button>
            </div>
            <div class="arrows">
                <button aria-label="Önceki sekme"><ui-icon name="tri"></ui-icon></button>
                <button aria-label="Sonraki sekme"><ui-icon name="rtri"></ui-icon></button>
            </div>
        </div>
        <div class="panel">
            <group-box class="one" caption="Müsteri Bilgileri">
                <form-field label="Müşteri cari"><ui-icon name="dots"></ui-icon><ui-icon name="edit"></ui-icon></form-field>
                <form-field label="Referans no"></form-field>
                <form-field label="Referans tarihi" kind="date" value="6.08.2024"></form-field>
            </group-box>
            <group-box class="two">
                <form-field label="Onay yolu" kind="select" value="0"></form-field>
                <form-field label="Durum tarihi" kind="date" value="  .  .      :  :"></form-field>
                <form-field label="Oturum kodu"></form-field>
                <form-field label="Proje"><ui-icon name="tag"></ui-icon><ui-icon name="note"></ui-icon></form-field>
            </group-box>
            <group-box class="three">
                <form-field label="Stok işlemi kapandı" kind="select" lead="warn" value="Açık"></form-field>
                <form-field label="AlışSatış işlemi kapandı" kind="select" lead="warn" value="Açık"></form-field>
                <form-field label="İşlem kapandı" kind="check"></form-field>
            </group-box>
        </div>
        `;
    }
}
customElements.define('detail-tabs', DetailTabs);
</script>
</body>
</html>
